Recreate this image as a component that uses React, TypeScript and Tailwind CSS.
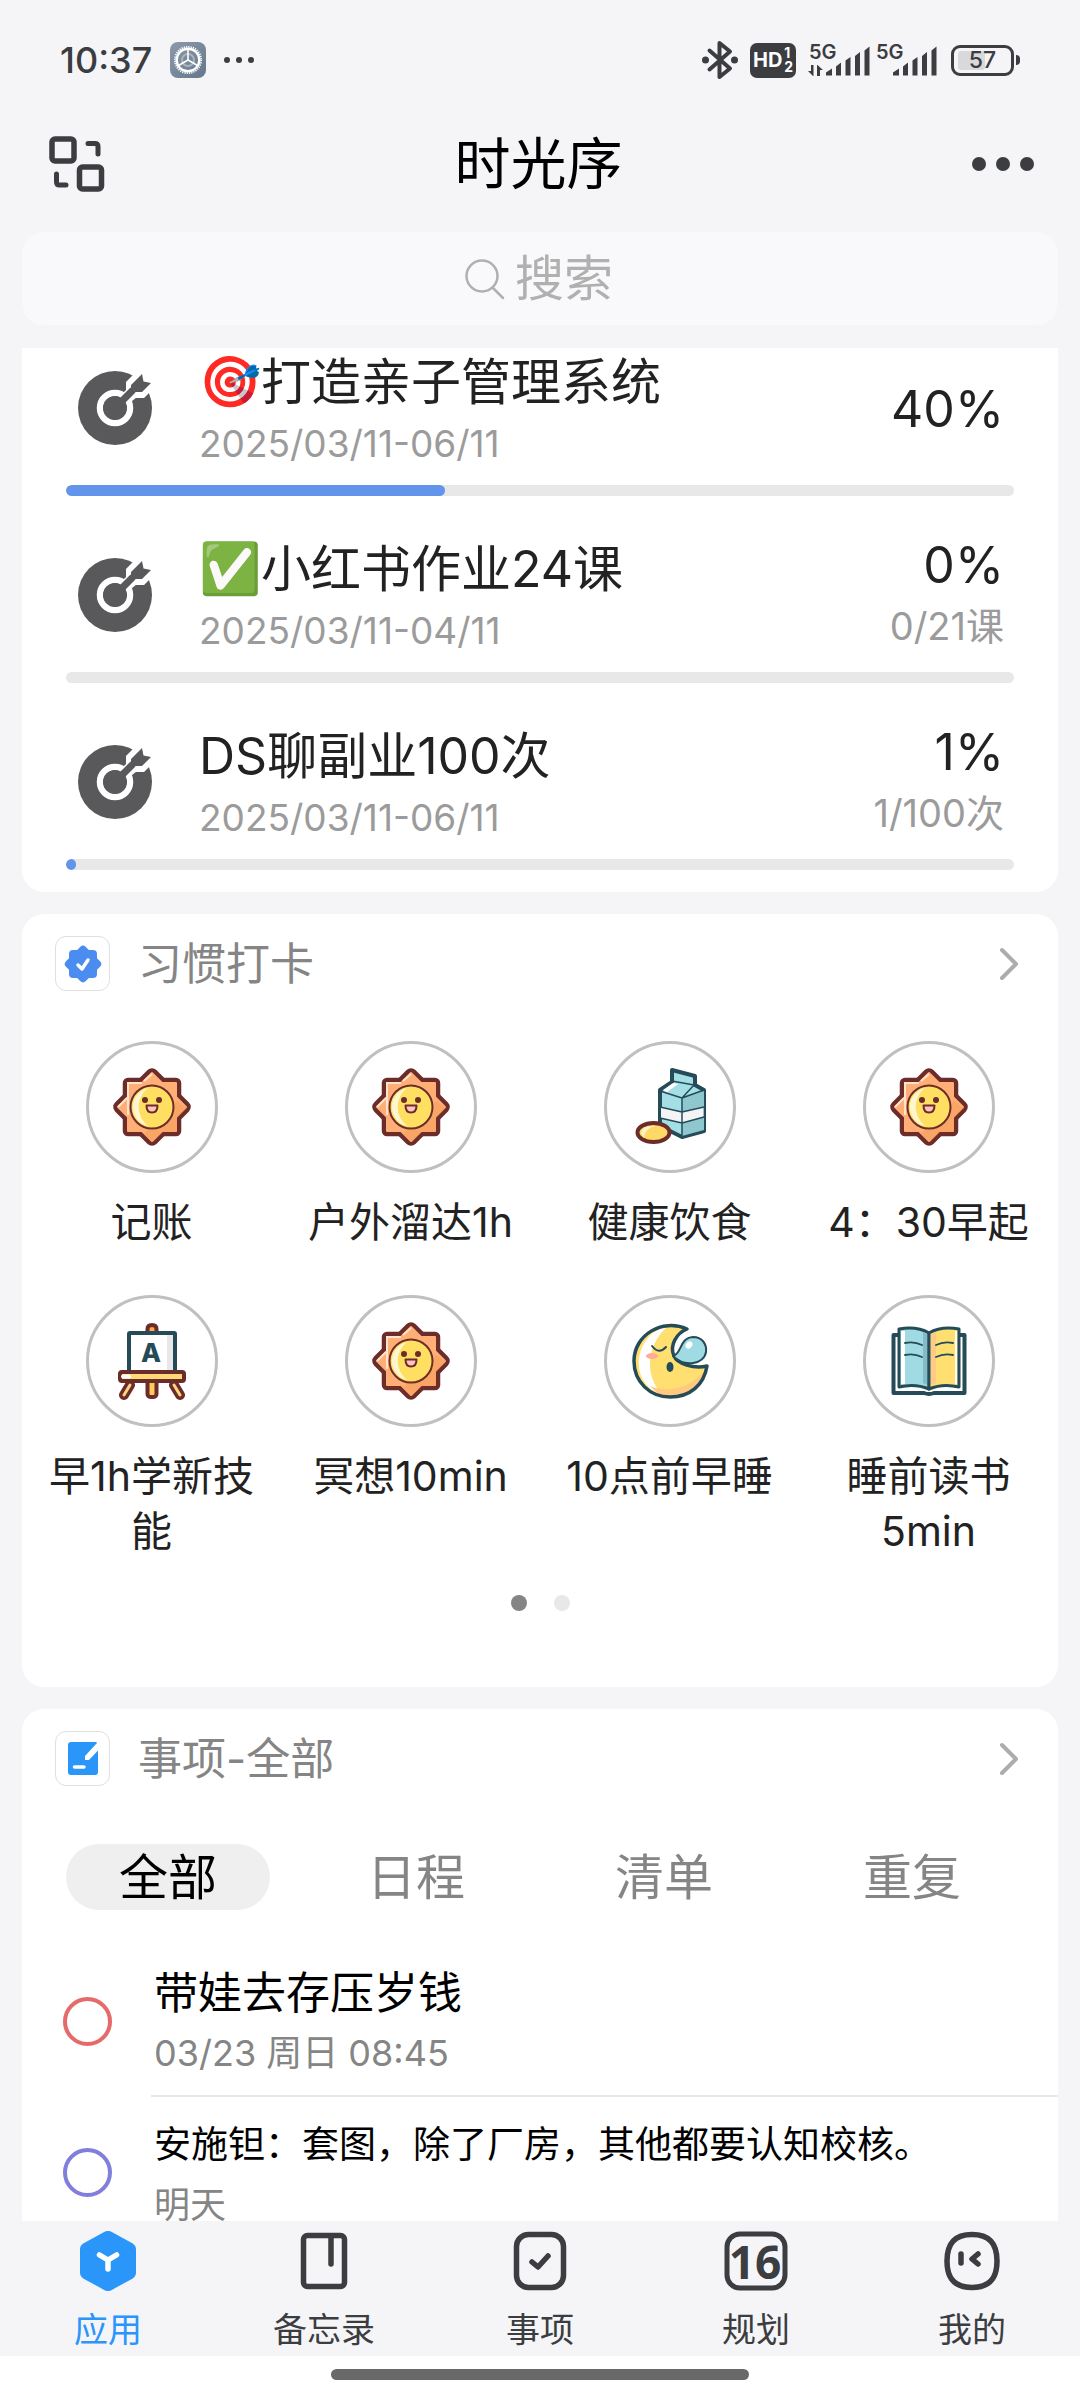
import type { ReactNode } from "react";

type Goal = { emoji?: string; title: string; range: string; percent: number; count?: string };

const goals: Goal[] = [
  { emoji: "🎯", title: "打造亲子管理系统", range: "2025/03/11-06/11", percent: 40 },
  { emoji: "✅", title: "小红书作业24课", range: "2025/03/11-04/11", percent: 0, count: "0/21课" },
  { title: "DS聊副业100次", range: "2025/03/11-06/11", percent: 1, count: "1/100次" },
];

const INK = "#3c3d41";
const TEAL = "#254b59";
const MAROON = "#6b2c2a";

function SettingsBadge() {
  return (
    <svg width="36" height="36" viewBox="0 0 36 36" aria-hidden="true">
      <defs>
        <linearGradient id="settings-bg" x1="0" y1="0" x2="1" y2="1">
          <stop offset="0" stopColor="#8c9bab" />
          <stop offset="1" stopColor="#64778b" />
        </linearGradient>
      </defs>
      <rect width="36" height="36" rx="8" fill="url(#settings-bg)" />
      <circle cx="18" cy="18" r="6" fill="none" stroke="#a9b4bf" strokeWidth="2" />
      <circle cx="18" cy="18" r="11.3" fill="none" stroke="#fff" strokeWidth="2.4" />
      <circle cx="18" cy="18" r="13.2" fill="none" stroke="#fff" strokeWidth="1.8" strokeDasharray="1.2 1.1" />
      <path d="M18 18V7M18 18l-9.5 5.5M18 18l9.5 5.5" stroke="#fff" strokeWidth="1.6" />
    </svg>
  );
}

function BluetoothIcon() {
  return (
    <svg width="36" height="40" viewBox="0 0 36 40" fill="none" stroke={INK} strokeWidth="4" strokeLinejoin="round" strokeLinecap="round" aria-hidden="true">
      <path d="M7.500 10.500L28 28.500L17.500 37V3L28 11.500L7.500 29.500" />
      <circle cx="3.500" cy="20" r="3.500" fill={INK} stroke="none" />
      <circle cx="32.500" cy="20" r="3.500" fill={INK} stroke="none" />
    </svg>
  );
}

function HdIcon() {
  return (
    <span className="relative flex h-[35px] w-[46px] items-center rounded-[7px] bg-[#3c3d41] pl-[3px] text-[20px] font-bold leading-none text-white">
      HD
      <span className="absolute right-[3px] top-[3px] flex flex-col text-[14px] leading-[14px]">
        <span>1</span>
        <span>2</span>
      </span>
    </span>
  );
}

function Signal({ data }: { data?: boolean }) {
  return (
    <svg width="62" height="40" viewBox="0 -2 62 40" fill={INK} className="overflow-visible" aria-hidden="true">
      <text x="1" y="17" fontSize="20" fontWeight="600" fontFamily="Inter, sans-serif">5G</text>
      <path d="M18 33.500v-3l6-4v7zM28 33.500v-9l5-4v13zM37.500 33.500v-15l5-3.500v18.500zM47 33.500V14l5-4v23.500zM56.500 33.500V8.500l5-4v29z" />
      {data && <path d="M3 23h2.500v11H5l-5-5h3zM9 34V23h.5l5.500 5h-3v6z" />}
    </svg>
  );
}

function Battery() {
  return (
    <span className="flex items-center">
      <span className="relative flex h-[31px] w-[63px] items-center justify-center rounded-[9px] border-[3px] border-[#3c3d41] text-[23px] font-medium leading-none text-[#3c3d41]">
        <span className="absolute bottom-[3px] left-1 top-[3px] w-[27px] rounded-[3px] bg-[#d9d9db]" />
        <span className="relative">57</span>
      </span>
      <span className="ml-[2px] h-[10px] w-[4px] rounded-r-full bg-[#3c3d41]" />
    </span>
  );
}

function SwitchIcon() {
  return (
    <svg width="56" height="56" viewBox="0 0 56 56" fill="none" stroke={INK} strokeWidth="5.500" strokeLinecap="round" strokeLinejoin="round" aria-hidden="true">
      <rect x="3" y="3" width="22" height="22" rx="3" />
      <rect x="30.500" y="31" width="22" height="22" rx="3" />
      <path d="M39 7.500h7q3 0 3 3V18M7.500 38v8q0 3 3 3H17" strokeWidth="5" />
    </svg>
  );
}

function TargetIcon() {
  return (
    <svg width="74" height="74" viewBox="0 0 74 74" className="mt-5 shrink-0" aria-hidden="true">
      <circle cx="37" cy="37" r="37" fill="#59595c" />
      <circle cx="37" cy="37" r="15" fill="none" stroke="#fff" strokeWidth="6.500" />
      <path d="M37 37L53 21V13L64 2L66 10L74 12L64 22H56Z" fill="#fff" stroke="#fff" strokeWidth="10" />
      <circle cx="37" cy="37" r="12" fill="#59595c" />
      <path d="M37 37L55 19" stroke="#59595c" strokeWidth="7" />
      <path d="M53 23V14L64 3L65.500 10.500L73 12L64 21H55Z" fill="#59595c" />
    </svg>
  );
}

function SunIcon() {
  return (
    <g>
      <g fill={MAROON} stroke={MAROON} strokeWidth="4.500">
        <rect x="-27" y="-27" width="54" height="54" rx="3" />
        <rect x="-27" y="-27" width="54" height="54" rx="4" transform="rotate(45)" />
      </g>
      <g fill="#ffae76">
        <rect x="-25" y="-25" width="50" height="50" rx="1" />
        <rect x="-25" y="-25" width="50" height="50" rx="1" transform="rotate(45)" />
      </g>
      <path d="M35 1L25 11V25H11L1 35L-8 27L25 -6Z" fill="#f0984f" opacity=".4" />
      <path d="M-24 8V-24H-10M-34 0L-25 -9M-8 -26L0 -33" fill="none" stroke="#ffe3cb" strokeWidth="2" />
      <circle r="21.500" fill="#ffdf62" stroke={MAROON} strokeWidth="2" />
      <path d="M-4 -19A19.500 19.500 0 0 0 -4 19A24 24 0 0 1 -4 -19" fill="#fff6cf" />
      <circle cx="-7" cy="-7" r="3" fill={MAROON} />
      <circle cx="7" cy="-7" r="3" fill={MAROON} />
      <path d="M-5.500 -1.500H5.500Q5.500 5.500 0 5.500T-5.500 -1.500Z" fill="#ffc3c0" stroke={MAROON} strokeWidth="2" strokeLinejoin="round" />
    </g>
  );
}

function MilkIcon() {
  return (
    <g strokeLinejoin="round">
      <path d="M2 -37L25 -31V-22L34 -17V24L12 30L-10 19V-17L2 -25Z" fill="#a4dfe6" stroke={TEAL} strokeWidth="4" />
      <path d="M12 -9L34 -16V23L12 29Z" fill="#8fc7cf" />
      <path d="M-9 0L12 5L33 0V10L12 16L-9 11Z" fill="#f4f4f6" />
      <path d="M-7 -17L3 -24L8 -23L-3 -15Z" fill="#fff" />
      <path d="M-10 -16L12 -9L34 -17M12 -9L24 -22L2 -26M12 -9V29M-10 0L12 5L34 0M-10 11L12 16L34 10" fill="none" stroke={TEAL} strokeWidth="1.500" />
      <ellipse cx="-16.500" cy="25.500" rx="16" ry="9.500" fill="#ffd966" stroke={MAROON} strokeWidth="4" />
      <path d="M-29 26Q-28 18 -15 19Q-25 21 -26 31Z" fill="#fff3cc" />
    </g>
  );
}

function EaselIcon() {
  return (
    <g strokeLinejoin="round" strokeLinecap="round">
      <path d="M-22 24L-28 34M22 24L28 34" stroke={MAROON} strokeWidth="10" />
      <path d="M-22 24L-28 34M22 24L28 34" stroke="#ffd27f" strokeWidth="3" />
      <rect x="-4.500" y="14" width="9" height="22" rx="3" fill="#ffc95e" stroke={MAROON} strokeWidth="4" />
      <path d="M-4.500 -29V-32Q-4.500 -36 0 -36T4.500 -32V-29" fill="#ffa64f" stroke={MAROON} strokeWidth="4" />
      <rect x="-23" y="-28" width="46" height="40" rx="1" fill="#fff" stroke={TEAL} strokeWidth="4" />
      <rect x="15" y="-26" width="6" height="36" fill="#e8e8e8" />
      <text x="-1" y="1" textAnchor="middle" fontSize="26" fontWeight="800" fontFamily="Inter, sans-serif" fill={TEAL}>A</text>
      <rect x="-32" y="11" width="64" height="9" rx="2" fill="#ffd978" stroke={MAROON} strokeWidth="4" />
      <path d="M-29 15.500H-23" stroke="#fff" strokeWidth="4" />
    </g>
  );
}

function MoonIcon() {
  return (
    <g strokeLinejoin="round" strokeLinecap="round">
      <path d="M17 -32C-8 -43 -36 -26 -36 0C-36 21 -20 36 0 36C20 36 34 24 37 5C24 8 7 3 4 -5C-1 -16 7 -28 17 -32Z" fill="#ffdf70" />
      <path d="M-6 -34C-30 -26 -38 4 -25 22C-18 31 -11 33 -8 33C-24 17 -26 -14 -2 -35Z" fill="#fff" />
      <path d="M-20 25C0 33 22 26 35 9C30 30 4 40 -12 33Z" fill="#ffc980" />
      <path d="M17 -32C-8 -43 -36 -26 -36 0C-36 21 -20 36 0 36C20 36 34 24 37 5C24 8 7 3 4 -5C-1 -16 7 -28 17 -32Z" fill="none" stroke={TEAL} strokeWidth="3.500" />
      <path d="M3 -5C12 -7 9 -23 23 -24C32 -24 37 -17 36 -9C34 3 15 7 3 -5Z" fill="#a0dbe4" stroke={TEAL} strokeWidth="2" />
      <ellipse cx="19" cy="-16" rx="3" ry="4" fill="#fff" transform="rotate(35 19 -16)" />
      <path d="M-18 -15Q-11 -6 -4 -14" fill="none" stroke={TEAL} strokeWidth="2" />
      <ellipse cx="-18" cy="-5" rx="6" ry="3" fill="#ffab98" />
      <ellipse cx="0" cy="6" rx="3.500" ry="5" fill={TEAL} />
    </g>
  );
}

function BookIcon() {
  return (
    <g strokeLinejoin="round" strokeLinecap="round">
      <path d="M-30 -26H-35.500V32H-5Q0 34 5 32H35.500V-26H30" fill="#fff" stroke={TEAL} strokeWidth="4" />
      <path d="M-30 -32Q-12 -35 0 -28V28Q-14 22 -30 26Z" fill="#a0dbe4" stroke={TEAL} strokeWidth="3" />
      <path d="M30 -32Q12 -35 0 -28V28Q14 22 30 26Z" fill="#ffdf70" stroke={TEAL} strokeWidth="3" />
      <path d="M-28 -30H-24V23H-28ZM26 -30H28V23H26Z" fill="#fff" />
      <path d="M-6 -29L-2 -27V24L-6 22Z" fill="#83bcc6" />
      <path d="M2 -27L7 -29V22L2 24Z" fill="#ffc98a" />
      <path d="M-24 -18Q-15 -20 -7 -16M-24 -6Q-15 -8 -7 -4M24 -18Q15 -20 7 -16M24 -6Q15 -8 7 -4" fill="none" stroke={TEAL} strokeWidth="1.800" />
    </g>
  );
}

const habits: { label: string; icon: ReactNode }[] = [
  { label: "记账", icon: <SunIcon /> },
  { label: "户外溜达1h", icon: <SunIcon /> },
  { label: "健康饮食", icon: <MilkIcon /> },
  { label: "4：30早起", icon: <SunIcon /> },
  { label: "早1h学新技能", icon: <EaselIcon /> },
  { label: "冥想10min", icon: <SunIcon /> },
  { label: "10点前早睡", icon: <MoonIcon /> },
  { label: "睡前读书5min", icon: <BookIcon /> },
];

function HabitBadge() {
  return (
    <svg width="40" height="40" viewBox="-20 -20 40 40" aria-hidden="true">
      <rect x="-14" y="-14" width="28" height="28" rx="4" fill="#4a8cf0" />
      <rect x="-14" y="-14" width="28" height="28" rx="4" fill="#4a8cf0" transform="rotate(45)" />
      <path d="M-5 1L-1 5L5 -4" fill="none" stroke="#fff" strokeWidth="3.500" strokeLinecap="round" strokeLinejoin="round" />
    </svg>
  );
}

function NoteBadge() {
  return (
    <svg width="30" height="34" viewBox="0 0 30 34" aria-hidden="true">
      <path d="M3 0H27Q30 0 30 3V30Q30 33 27 33H3Q0 33 0 30V3Q0 0 3 0Z" fill="#2a96fa" />
      <path d="M17 18V14L29 1L30.500 0V8L21 18Z" fill="#fff" />
      <path d="M6.500 25H16" stroke="#fff" strokeWidth="3.500" strokeLinecap="round" />
    </svg>
  );
}

function CardHeader({ icon, title }: { icon: ReactNode; title: string }) {
  return (
    <a href="#" className="flex items-center pl-[33px] pr-[38px]">
      <span className="flex size-[55px] items-center justify-center rounded-[11px] border border-[#e0e0e0]">{icon}</span>
      <h2 className="ml-7 flex-1 text-[44px] leading-[54px] text-[#858585]">{title}</h2>
      <svg width="22" height="36" viewBox="0 0 22 36" fill="none" stroke="#adadad" strokeWidth="4" strokeLinecap="round" strokeLinejoin="round" aria-hidden="true">
        <path d="M4 4L18 18L4 32" />
      </svg>
    </a>
  );
}

const tabs = ["全部", "日程", "清单", "重复"];

function navStroke(children: ReactNode) {
  return (
    <svg width="64" height="60" viewBox="-32 -30 64 60" fill="none" stroke={INK} strokeWidth="5.500" strokeLinecap="round" strokeLinejoin="round" aria-hidden="true">
      {children}
    </svg>
  );
}

const navItems: { label: string; icon: ReactNode }[] = [
  {
    label: "应用",
    icon: (
      <svg width="64" height="60" viewBox="-32 -30 64 60" aria-hidden="true">
        <path d="M0 -23L21 -11.500V11.500L0 23L-21 11.500V-11.500Z" fill="#2a96fa" stroke="#2a96fa" strokeWidth="14" strokeLinejoin="round" />
        <path d="M-8.500 -6L0 -1L8.500 -6M0 -1V8" fill="none" stroke="#fff" strokeWidth="5.500" strokeLinecap="round" strokeLinejoin="round" />
      </svg>
    ),
  },
  {
    label: "备忘录",
    icon: navStroke(<><rect x="-20.500" y="-25.500" width="41" height="51" rx="4" /><path d="M7 -25V3" /></>),
  },
  {
    label: "事项",
    icon: navStroke(<><rect x="-23.500" y="-26.500" width="47" height="53" rx="12" /><path d="M-8 1L-2 6L8 -5" /></>),
  },
  {
    label: "规划",
    icon: navStroke(
      <>
        <rect x="-29" y="-27" width="58" height="54" rx="13" strokeWidth="5" />
        <text x="-1" y="18" textAnchor="middle" fontSize="46" fontWeight="700" fontFamily="'Noto Sans', sans-serif" fill={INK} stroke="none">16</text>
      </>,
    ),
  },
  {
    label: "我的",
    icon: navStroke(
      <>
        <path d="M0 -26.500C17 -26.500 25 -18 25 0S17 26.500 0 26.500S-25 18 -25 0S-17 -26.500 0 -26.500Z" />
        <path d="M-11 -7V2M6 -7L0 -2L6 3" />
      </>,
    ),
  },
];

const tasks = [
  { title: "带娃去存压岁钱", size: "text-[44px]", time: "03/23 周日 08:45", timeSize: "text-[36px]", ring: "border-[#e66a6a]" },
  { title: "安施钽：套图，除了厂房，其他都要认知校核。", size: "text-[37px]", time: "明天", timeSize: "text-[36px]", ring: "border-[#827fdc]" },
];

export default function App() {
  return (
    <div className="flex h-screen flex-col bg-[#f5f5f8] font-['Inter','Noto_Sans_CJK_SC',sans-serif] text-[#222]">
      <div className="flex items-center justify-between px-[60px] pt-10 text-[#3c3d41]">
        <div className="flex h-10 items-center">
          <span className="text-[36px] font-medium leading-10">10:37</span>
          <span className="ml-[18px]"><SettingsBadge /></span>
          <span className="ml-[18px] flex gap-[6px]">
            <i className="size-[6px] rounded-full bg-[#3c3d41]" />
            <i className="size-[6px] rounded-full bg-[#3c3d41]" />
            <i className="size-[6px] rounded-full bg-[#3c3d41]" />
          </span>
        </div>
        <div className="flex h-10 items-center">
          <BluetoothIcon />
          <span className="ml-3"><HdIcon /></span>
          <span className="ml-3"><Signal data /></span>
          <span className="ml-[5px]"><Signal /></span>
          <span className="ml-[14px]"><Battery /></span>
        </div>
      </div>

      <header className="mt-[52px] flex h-16 items-center justify-between pl-[49px] pr-[46px]">
        <button type="button" aria-label="切换视图"><SwitchIcon /></button>
        <h1 className="text-[56px] leading-16 text-black">时光序</h1>
        <button type="button" aria-label="更多" className="flex gap-[10px]">
          <i className="size-[14px] rounded-full bg-[#3c3d41]" />
          <i className="size-[14px] rounded-full bg-[#3c3d41]" />
          <i className="size-[14px] rounded-full bg-[#3c3d41]" />
        </button>
      </header>

      <label className="mx-[22px] mt-9 flex h-[93px] items-center justify-center gap-[10px] rounded-[22px] bg-[#f9f9fb]">
        <svg width="40" height="42" viewBox="0 0 40 42" fill="none" stroke="#b0b0b0" strokeWidth="2.500" strokeLinecap="round" aria-hidden="true">
          <circle cx="17" cy="18" r="15.500" />
          <path d="M28 30L38 40" />
        </svg>
        <input type="text" aria-label="搜索" placeholder="搜索" className="h-[72px] w-[100px] bg-transparent text-[49px] outline-none placeholder:text-[#b0b0b0]" />
      </label>

      <main className="mt-[23px] flex min-h-0 flex-1 flex-col gap-[22px] overflow-y-auto px-[22px] [scrollbar-width:none]">
        <section className="flex shrink-0 flex-col gap-[39px] rounded-b-[22px] bg-white px-11 pb-[22px]">
          {goals.map((g) => (
            <article key={g.title}>
              <div className="flex h-[127px] items-start pl-3 pr-[10px] pt-[3px]">
                <TargetIcon />
                <div className="ml-[47px] flex-1">
                  <h3 className="flex items-center text-[50px] leading-[62px]">
                    {g.emoji && <span className="w-[62px] font-['Noto_Color_Emoji']">{g.emoji}</span>}
                    {g.title}
                  </h3>
                  <p className="text-[37px] leading-[62px] text-[#9b9b9b]">{g.range}</p>
                </div>
                <div className="flex h-[116px] flex-col justify-center text-right">
                  <p className="text-[50px] leading-[60px]">{g.percent}%</p>
                  {g.count && <p className="text-[38px] leading-[62px] text-[#9b9b9b]">{g.count}</p>}
                </div>
              </div>
              <div className="mt-[10px] h-[11px] overflow-hidden rounded-full bg-[#e8e8e8]">
                {g.percent > 0 && <div className="h-full min-w-[10px] rounded-full bg-[#6394ec]" style={{ width: `${g.percent}%` }} />}
              </div>
            </article>
          ))}
        </section>

        <section className="shrink-0 rounded-[22px] bg-white pb-[76px] pt-[22px]">
          <CardHeader icon={<HabitBadge />} title="习惯打卡" />
          <div className="mt-[50px] grid grid-cols-4 gap-y-[45px]">
            {habits.map((h) => (
              <button type="button" key={h.label} className="flex flex-col items-center">
                <span className="flex size-[132px] items-center justify-center rounded-full border-[3px] border-[#c0c0c0]">
                  <svg width="80" height="80" viewBox="-40 -40 80 80" aria-hidden="true">{h.icon}</svg>
                </span>
                <span className="mt-[22px] max-w-[222px] text-[41px] leading-[55px]">{h.label}</span>
              </button>
            ))}
          </div>
          <div className="mt-9 flex justify-center gap-[27px]">
            <i className="size-4 rounded-full bg-[#858585]" />
            <i className="size-4 rounded-full bg-[#e8e8e8]" />
          </div>
        </section>

        <section className="shrink-0 rounded-[22px] bg-white pt-[22px]">
          <CardHeader icon={<NoteBadge />} title="事项-全部" />
          <div role="tablist" className="mx-11 mt-[58px] grid grid-cols-4 gap-11">
            {tabs.map((t, i) => (
              <button
                type="button"
                role="tab"
                aria-selected={i === 0}
                key={t}
                className={`h-[66px] rounded-full text-[49px] leading-[68px] ${i === 0 ? "bg-[#efefef] text-black" : "text-[#858585]"}`}
              >
                {t}
              </button>
            ))}
          </div>
          <ul className="mt-[35px]">
            {tasks.map((t, i) => (
              <li key={t.title} className="flex items-center pl-[41px]">
                <input type="checkbox" id={`task-${i}`} className={`size-[49px] shrink-0 appearance-none rounded-full border-4 ${t.ring}`} />
                <label htmlFor={`task-${i}`} className={`ml-[39px] block flex-1 pb-3 pl-[3px] pt-[18px] ${i === 0 ? "border-b-2 border-[#e5e6e8]" : ""}`}>
                  <span className={`block leading-[60px] text-black ${t.size}`}>{t.title}</span>
                  <span className={`block leading-[60px] text-[#858585] ${t.timeSize}`}>{t.time}</span>
                </label>
              </li>
            ))}
          </ul>
        </section>
      </main>

      <nav className="grid h-[135px] shrink-0 grid-cols-5 pt-[10px]">
        {navItems.map((n, i) => (
          <a href="#" key={n.label} className={`flex flex-col items-center ${i === 0 ? "text-[#2a96fa]" : "text-[#3c3d41]"}`}>
            {n.icon}
            <span className="mt-4 text-[34px] leading-[46px]">{n.label}</span>
          </a>
        ))}
      </nav>
      <div className="flex h-11 shrink-0 justify-center bg-white pt-[13px]">
        <i className="h-[11px] w-[418px] rounded-full bg-[#696969]" />
      </div>
    </div>
  );
}
